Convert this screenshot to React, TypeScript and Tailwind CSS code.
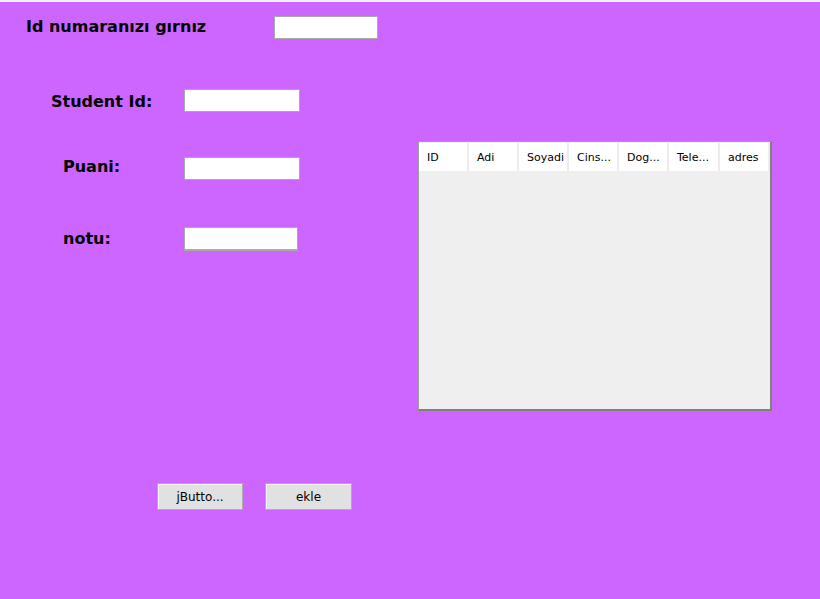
import React from "react";

const font = { fontFamily: '"DejaVu Sans", Verdana, sans-serif' };

function Field({ w }: { w: string }) {
  return <div className={`h-[23px] bg-white border border-[#aaaaaa] ${w}`} />;
}

function Btn({ label, w }: { label: string; w: string }) {
  return (
    <div className={`${w} h-[27px] bg-[#e1e1e1] border border-[#adadad] shadow-[inset_1px_1px_0_#f6f6f6] flex items-center justify-center text-[12px] text-black`}>
      {label}
    </div>
  );
}

export default function App() {
  const cols = ["ID", "Adi", "Soyadi", "Cins...", "Dog...", "Tele...", "adres"];
  return (
    <div
      className="w-[820px] h-[599px] bg-[#cc66ff] border-t-2 border-[#eeeeff] overflow-hidden"
      style={font}
    >
      <div className="flex items-center pt-[14px] pl-[26px]">
        <div className="w-[248px] text-[16px] font-bold text-black leading-none -mt-[2px]">Id numaranızı gırnız</div>
        <Field w="w-[104px]" />
      </div>

      <div className="flex mt-[49px]">
        <div className="flex flex-col">
          <div className="flex items-center h-[24px]">
            <div className="w-[184px] pl-[51px] text-[16px] font-bold leading-none mt-[3px]">Student Id:</div>
            <Field w="w-[116px]" />
          </div>
          <div className="flex items-center h-[24px] mt-[44px]">
            <div className="w-[184px] pl-[63px] text-[16px] font-bold leading-none -mt-[2px]">Puani:</div>
            <Field w="w-[116px]" />
          </div>
          <div className="flex items-center h-[24px] mt-[47px]">
            <div className="w-[184px] pl-[63px] text-[16px] font-bold leading-none">notu:</div>
            <div className="h-[24px] w-[114px] bg-white border border-[#aaaaaa] border-b-2" />
          </div>
        </div>

        <div className="ml-[118px] mt-[53px] w-[354px] h-[270px] border-l border-t border-[#a0a0a0] border-r-2 border-b-2 border-r-[#808080] border-b-[#808080] bg-[#efefef] flex flex-col">
          <div className="flex h-[28px] mt-[1px] bg-white">
            {cols.map((c, i) => (
              <div
                key={c}
                className={`${i === 5 ? "w-[51px]" : "w-[50px]"} h-full flex items-center pl-[8px] pt-[2px] text-[11px] text-black border-r-2 border-[#ececec]`}
              >
                {c}
              </div>
            ))}
          </div>
        </div>
      </div>

      <div className="flex mt-[72px] pl-[157px] gap-[22px]">
        <Btn label="jButto..." w="w-[86px]" />
        <Btn label="ekle" w="w-[87px]" />
      </div>
    </div>
  );
}
